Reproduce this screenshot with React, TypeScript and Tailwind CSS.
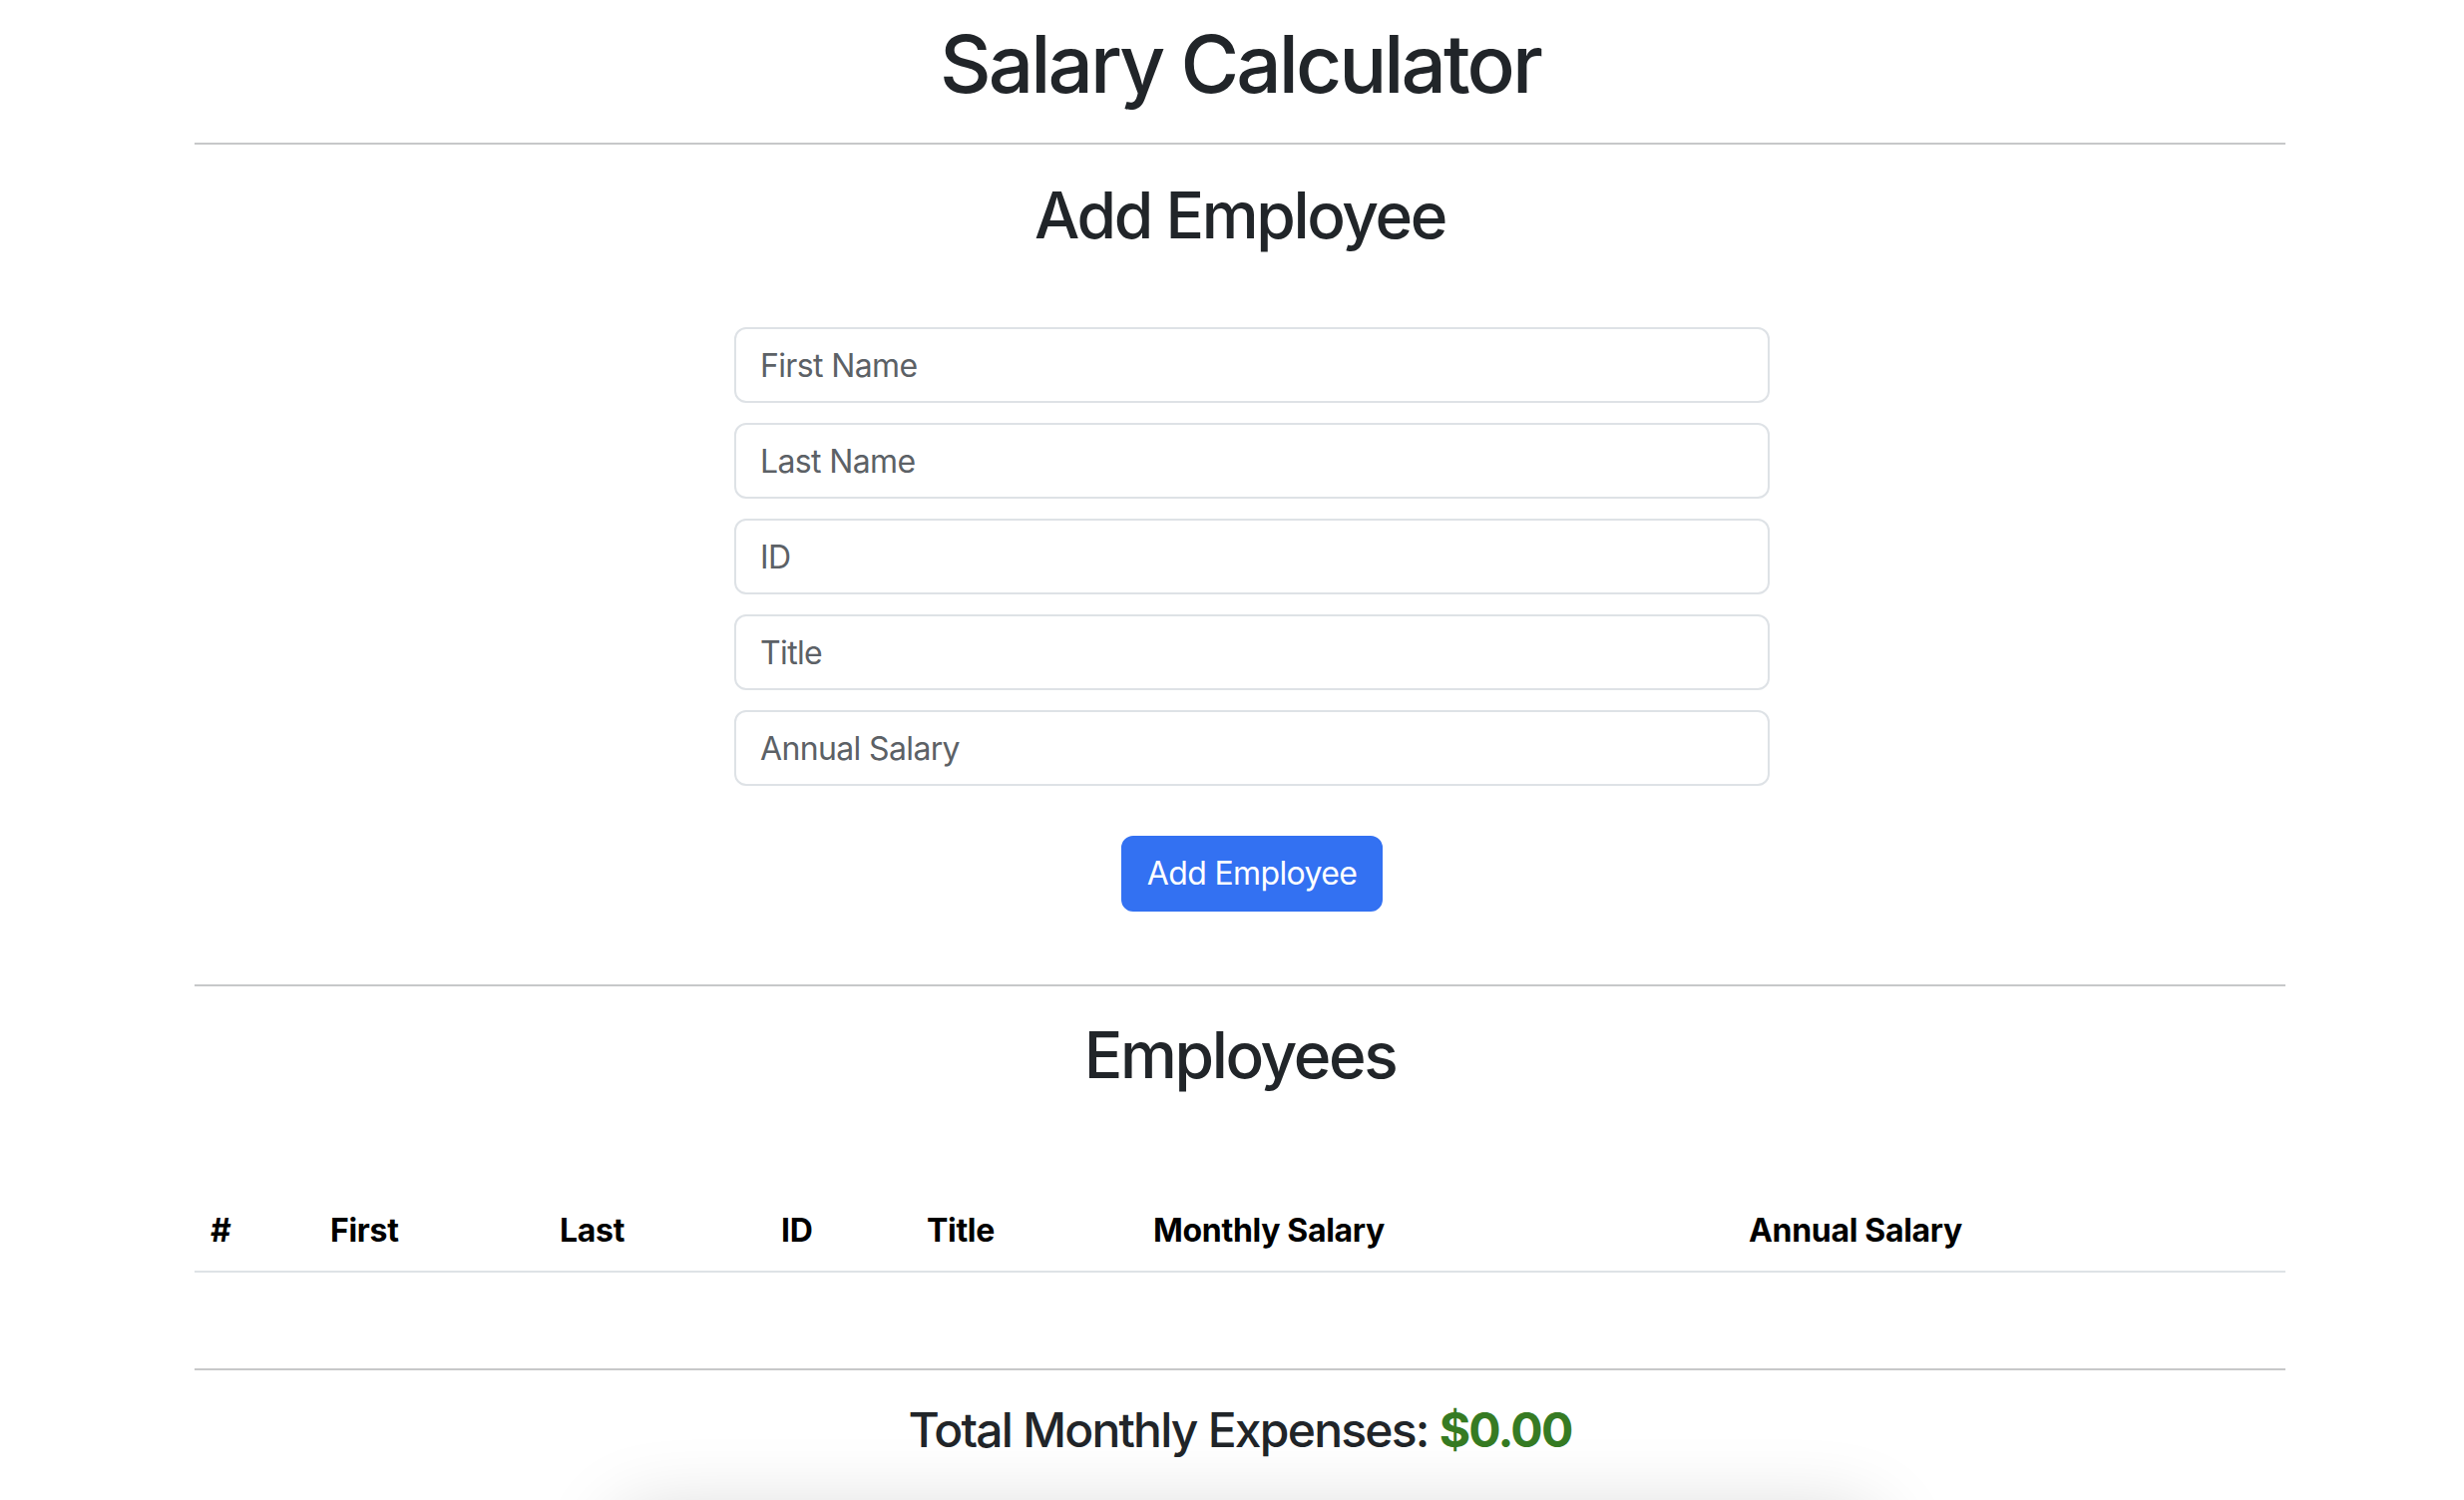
const fields = ["First Name", "Last Name", "ID", "Title", "Annual Salary"];

const columns = [
    { label: "#", width: "w-[120px]" },
    { label: "First", width: "w-[230px]" },
    { label: "Last", width: "w-[222px]" },
    { label: "ID", width: "w-[146px]" },
    { label: "Title", width: "w-[227px]" },
    { label: "Monthly Salary", width: "w-[597px]" },
    { label: "Annual Salary", width: "" },
];

export default function App() {
    return (
        <div className="h-screen overflow-hidden bg-white font-['Inter',sans-serif] text-[#212529]">
            <div className="ml-[195px] w-[2096px]">
                <h1 className="pt-[16px] text-center text-[80px] font-medium leading-[96px] tracking-[-0.037em]">
                    Salary Calculator
                </h1>
                <hr className="mt-[31px] border-t-2 border-[#c7c8c9]" />

                {/* Add employee form */}
                <h2 className="mt-[32px] text-center text-[64px] font-medium leading-[77px] tracking-[-0.037em]">
                    Add Employee
                </h2>
                <form className="ml-[541px] mt-[74px] flex w-[1038px] flex-col gap-[20px]">
                    {fields.map((f) => (
                        <input
                            key={f}
                            type="text"
                            placeholder={f}
                            className="h-[76px] rounded-[12px] border-2 border-[#dee2e6] bg-white px-[24px] text-[32px] leading-[48px] tracking-[-0.02em] text-[#212529] outline-none placeholder:text-[#5c6166]"
                        />
                    ))}
                    <button
                        type="button"
                        className="mt-[30px] h-[76px] self-center rounded-[12px] border-2 border-[#3371f2] bg-[#3371f2] px-[24px] text-[32px] leading-[48px] tracking-[-0.02em] text-white"
                    >
                        Add Employee
                    </button>
                </form>
                <hr className="mt-[73px] border-t-2 border-[#c7c8c9]" />

                {/* Employee table */}
                <h2 className="mt-[30px] text-center text-[64px] font-medium leading-[77px] tracking-[-0.037em]">
                    Employees
                </h2>
                <table className="mt-[98px] w-full table-fixed border-collapse">
                    <thead>
                        <tr className="border-b-2 border-[#dee2e6]">
                            {columns.map((c) => (
                                <th
                                    key={c.label}
                                    className={`${c.width} px-[16px] py-[16px] text-left text-[32px] font-bold leading-[48px] tracking-[-0.01em] text-black`}
                                >
                                    {c.label}
                                </th>
                            ))}
                        </tr>
                    </thead>
                    <tbody />
                </table>
                <hr className="mt-[96px] border-t-2 border-[#c7c8c9]" />

                <h4 className="mt-[31px] text-center text-[48px] font-medium leading-[58px] tracking-[-0.037em]">
                    Total Monthly Expenses: <span className="font-bold text-[#367b23]">$0.00</span>
                </h4>
            </div>

            {/* card below the fold, only its shadow shows */}
            <div className="mx-auto mt-[57px] h-[300px] w-[1260px] translate-x-[15px] rounded-[24px] bg-white shadow-[0_0_80px_rgba(0,0,0,0.18)]" />
        </div>
    );
}
